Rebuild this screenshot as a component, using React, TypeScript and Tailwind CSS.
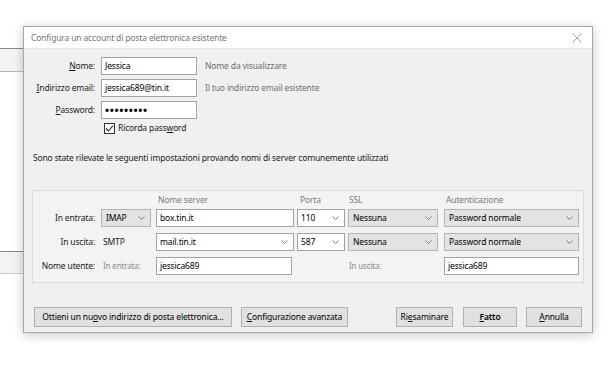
import React from "react";

const Chevron = () => (
  <svg width="7" height="4" viewBox="0 0 7 4" className="shrink-0">
    <polyline points="0.5,0.5 3.5,3.5 6.5,0.5" fill="none" stroke="#707070" strokeWidth="0.9" />
  </svg>
);

const Field = ({ className, children }: { className: string; children?: React.ReactNode }) => (
  <div className={"flex h-[18px] items-center border border-[#a2a2a2] bg-white pl-[3px] text-black " + className}>
    {children}
  </div>
);

const Dropdown = ({ className, value }: { className: string; value: string }) => (
  <div className={"flex h-[18px] items-center justify-between border border-[#b4b4b4] bg-[#e3e3e3] pl-[4px] pr-[5px] text-black " + className}>
    <span>{value}</span>
    <Chevron />
  </div>
);

const Button = ({ className, children }: { className: string; children: React.ReactNode }) => (
  <div className={"flex h-[20px] items-center justify-center whitespace-nowrap border border-[#b0b0b0] bg-[#e1e1e1] text-black " + className}>
    {children}
  </div>
);

export default function App() {
  return (
    <div className="relative h-[372px] w-[610px] overflow-hidden whitespace-nowrap bg-white font-['Noto_Sans',sans-serif] text-[8.5px] leading-[12px] tracking-[-0.15px] text-[#1a1a1a]">
      {/* windows behind the dialog */}
      <div className="absolute left-0 top-[48px] h-[24px] w-[60px] border-y border-t-[#8a8a8a] border-b-[#b8b8b8] bg-[#f3f3f3]" />
      <div className="absolute left-0 top-[251px] h-[23px] w-[60px] border-y border-t-[#8a8a8a] border-b-[#c8c8c8] bg-[#f3f3f3]" />

      <div className="relative pl-[23px] pt-[26px]">
        <div className="flex h-[307px] w-[570px] flex-col border border-[#a8a8a8] bg-[#f0f0f0] shadow-[0_2px_10px_rgba(0,0,0,0.22)]">
          {/* title bar */}
          <div className="flex h-[22px] items-center justify-between border-b border-[#e4e4e4] bg-white pl-[7px] pr-[10px]">
            <span className="text-[#767676]">Configura un account di posta elettronica esistente</span>
            <svg width="10" height="10" viewBox="0 0 10 10">
              <path d="M0.5 0.5 L9.5 9.5 M9.5 0.5 L0.5 9.5" stroke="#9a9a9a" strokeWidth="0.9" />
            </svg>
          </div>

          <div className="flex flex-1 flex-col pl-[8px] pr-[10px] pt-[8px]">
            {/* identity */}
            <div className="grid grid-cols-[63px_96px_1fr] gap-x-[6px] gap-y-[4px]">
              <div className="flex h-[18px] items-center justify-end"><span><u>N</u>ome:</span></div>
              <Field className="w-[96px]">Jessica</Field>
              <div className="flex h-[18px] items-center pl-[2px] text-[#6e6e6e]">Nome da visualizzare</div>

              <div className="flex h-[18px] items-center justify-end"><span><u>I</u>ndirizzo email:</span></div>
              <Field className="w-[96px]">jessica689@tin.it</Field>
              <div className="flex h-[18px] items-center pl-[2px] text-[#6e6e6e]">Il tuo indirizzo email esistente</div>

              <div className="flex h-[18px] items-center justify-end"><span><u>P</u>assword:</span></div>
              <Field className="w-[96px] tracking-[0.6px]">
                <span className="text-[11px] font-bold leading-[12px]">•••••••••</span>
              </Field>
              <div />

              <div />
              <div className="mt-[-1px] flex items-center gap-[3px] pl-[3px]">
                <svg width="11" height="11" viewBox="0 0 11 11">
                  <rect x="0.5" y="0.5" width="10" height="10" fill="white" stroke="#333" />
                  <polyline points="2,5.5 4.5,8 9,2.5" fill="none" stroke="#222" strokeWidth="1.1" />
                </svg>
                <span>Ricorda pass<u>w</u>ord</span>
              </div>
              <div />
            </div>

            <p className="mt-[18px] pl-[1px]">
              Sono state rilevate le seguenti impostazioni provando nomi di server comunemente utilizzati
            </p>

            {/* server settings */}
            <div className="mt-[26px] w-[552px] border border-[#dcdcdc] bg-[#f3f3f3] pb-[7px] pt-[3px]">
              <div className="grid grid-cols-[68px_55px_141px_51px_96px_135px] items-center gap-y-[6px]">
                <div />
                <div />
                <div className="mb-[-3px] pl-[2px] text-[#7a7a7a]">Nome server</div>
                <div className="mb-[-3px] pl-[3px] text-[#7a7a7a]">Porta</div>
                <div className="mb-[-3px] pl-[1px] text-[#7a7a7a]">SSL</div>
                <div className="mb-[-3px] pl-[2px] text-[#7a7a7a]">Autenticazione</div>

                <div className="pr-[6px] text-right">In entrata:</div>
                <Dropdown className="w-[50px]" value="IMAP" />
                <Field className="w-[138px]">box.tin.it</Field>
                <Field className="w-[48px] justify-between pr-[5px]">
                  <span>110</span>
                  <Chevron />
                </Field>
                <Dropdown className="w-[90px]" value="Nessuna" />
                <Dropdown className="w-[135px]" value="Password normale" />

                <div className="pr-[6px] text-right">In uscita:</div>
                <div className="pl-[2px]">SMTP</div>
                <Field className="w-[138px] justify-between pr-[5px]">
                  <span>mail.tin.it</span>
                  <Chevron />
                </Field>
                <Field className="w-[48px] justify-between pr-[5px]">
                  <span>587</span>
                  <Chevron />
                </Field>
                <Dropdown className="w-[90px]" value="Nessuna" />
                <Dropdown className="w-[135px]" value="Password normale" />

                <div className="pr-[6px] text-right">Nome utente:</div>
                <div className="pl-[2px] text-[8px] text-[#8a8a8a]">In entrata:</div>
                <Field className="w-[136px]">jessica689</Field>
                <div />
                <div className="pl-[1px] text-[8px] text-[#8a8a8a]">In uscita:</div>
                <Field className="w-[135px]">jessica689</Field>
              </div>
            </div>

            {/* buttons */}
            <div className="mt-[24px] flex items-center pl-[2px]">
              <Button className="w-[198px]">
                <span>Ottieni un nu<u>o</u>vo indirizzo di posta elettronica...</span>
              </Button>
              <Button className="ml-[9px] w-[107px]">
                <span><u>C</u>onfigurazione avanzata</span>
              </Button>
              <div className="flex-1" />
              <Button className="w-[57px]">
                <span>Ri<u>e</u>saminare</span>
              </Button>
              <Button className="ml-[10px] w-[54px] font-semibold">
                <span><u>F</u>atto</span>
              </Button>
              <Button className="ml-[9px] w-[56px]">
                <span><u>A</u>nnulla</span>
              </Button>
            </div>
          </div>
        </div>
      </div>
    </div>
  );
}
